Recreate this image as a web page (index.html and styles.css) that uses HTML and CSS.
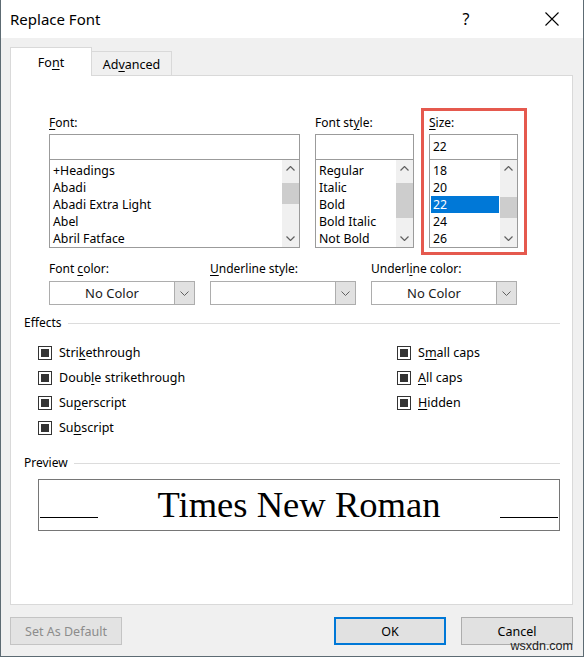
FILE: index.html
```html
<!DOCTYPE html>
<html lang="en">
<head>
  <meta charset="UTF-8">
  <meta name="viewport" content="width=device-width, initial-scale=1.0">
  <title>Replace Font</title>
  <link rel="stylesheet" href="styles.css">
</head>
<body>
  <div class="window">
    <div class="titlebar">
      <span class="title">Replace Font</span>
      <span class="help">?</span>
      <span class="close">
        <svg width="14" height="14" viewBox="0 0 14 14"><path d="M0.5 0.5 L13.5 13.5 M13.5 0.5 L0.5 13.5" stroke="#000" stroke-width="1.1" fill="none"/></svg>
      </span>
    </div>

    <div class="tabs">
      <div class="tab active">Fo<u>n</u>t</div>
      <div class="tab">Ad<u>v</u>anced</div>
    </div>

    <div class="panel">
      <div class="font-row">
        <div class="field">
          <label><u>F</u>ont:</label>
          <div class="input"></div>
          <div class="list">
            <ul class="items">
              <li>+Headings</li>
              <li>Abadi</li>
              <li>Abadi Extra Light</li>
              <li>Abel</li>
              <li>Abril Fatface</li>
            </ul>
            <div class="scrollbar">
              <span class="arrow"><svg width="9" height="5" viewBox="0 0 9 5"><polyline points="0.5,4.5 4.5,0.5 8.5,4.5" stroke="#606060" stroke-width="1.2" fill="none"/></svg></span>
              <span class="track"><span class="thumb thumb-font"></span></span>
              <span class="arrow"><svg width="9" height="5" viewBox="0 0 9 5"><polyline points="0.5,0.5 4.5,4.5 8.5,0.5" stroke="#606060" stroke-width="1.2" fill="none"/></svg></span>
            </div>
          </div>
        </div>

        <div class="field">
          <label>Font st<u>y</u>le:</label>
          <div class="input"></div>
          <div class="list">
            <ul class="items">
              <li>Regular</li>
              <li>Italic</li>
              <li>Bold</li>
              <li>Bold Italic</li>
              <li>Not Bold</li>
            </ul>
            <div class="scrollbar">
              <span class="arrow"><svg width="9" height="5" viewBox="0 0 9 5"><polyline points="0.5,4.5 4.5,0.5 8.5,4.5" stroke="#606060" stroke-width="1.2" fill="none"/></svg></span>
              <span class="track"><span class="thumb thumb-style"></span></span>
              <span class="arrow"><svg width="9" height="5" viewBox="0 0 9 5"><polyline points="0.5,0.5 4.5,4.5 8.5,0.5" stroke="#606060" stroke-width="1.2" fill="none"/></svg></span>
            </div>
          </div>
        </div>

        <div class="field size-field">
          <label><u>S</u>ize:</label>
          <div class="input">22</div>
          <div class="list">
            <ul class="items">
              <li>18</li>
              <li>20</li>
              <li class="selected">22</li>
              <li>24</li>
              <li>26</li>
            </ul>
            <div class="scrollbar">
              <span class="arrow"><svg width="9" height="5" viewBox="0 0 9 5"><polyline points="0.5,4.5 4.5,0.5 8.5,4.5" stroke="#606060" stroke-width="1.2" fill="none"/></svg></span>
              <span class="track"><span class="thumb thumb-size"></span></span>
              <span class="arrow"><svg width="9" height="5" viewBox="0 0 9 5"><polyline points="0.5,0.5 4.5,4.5 8.5,0.5" stroke="#606060" stroke-width="1.2" fill="none"/></svg></span>
            </div>
          </div>
        </div>
      </div>

      <div class="color-row">
        <div class="field">
          <label>Font <u>c</u>olor:</label>
          <div class="combo">
            <span class="combo-text">No Color</span>
            <span class="combo-btn"><svg width="9" height="5" viewBox="0 0 9 5"><polyline points="0.5,0.5 4.5,4.5 8.5,0.5" stroke="#606060" stroke-width="1" fill="none"/></svg></span>
          </div>
        </div>
        <div class="field">
          <label><u>U</u>nderline style:</label>
          <div class="combo">
            <span class="combo-text"></span>
            <span class="combo-btn"><svg width="9" height="5" viewBox="0 0 9 5"><polyline points="0.5,0.5 4.5,4.5 8.5,0.5" stroke="#606060" stroke-width="1" fill="none"/></svg></span>
          </div>
        </div>
        <div class="field">
          <label>Underl<u>i</u>ne color:</label>
          <div class="combo">
            <span class="combo-text">No Color</span>
            <span class="combo-btn"><svg width="9" height="5" viewBox="0 0 9 5"><polyline points="0.5,0.5 4.5,4.5 8.5,0.5" stroke="#606060" stroke-width="1" fill="none"/></svg></span>
          </div>
        </div>
      </div>

      <div class="section">Effects</div>
      <div class="checks">
        <div class="check"><span class="box"></span>Stri<u>k</u>ethrough</div>
        <div class="check"><span class="box"></span>Doub<u>l</u>e strikethrough</div>
        <div class="check"><span class="box"></span>Su<u>p</u>erscript</div>
        <div class="check"><span class="box"></span>Su<u>b</u>script</div>
        <div class="check"><span class="box"></span>S<u>m</u>all caps</div>
        <div class="check"><span class="box"></span><u>A</u>ll caps</div>
        <div class="check"><span class="box"></span><u>H</u>idden</div>
      </div>

      <div class="section preview-title">Preview</div>
      <div class="preview">
        <span class="uline"></span>
        <span class="sample">Times New Roman</span>
        <span class="uline"></span>
      </div>
    </div>

    <div class="buttons">
      <button class="btn" disabled>Set As Default</button>
      <div class="btn-group">
        <button class="btn primary">OK</button>
        <button class="btn">Cancel</button>
      </div>
    </div>

    <span class="watermark">wsxdn.com</span>
  </div>
</body>
</html>
```

FILE: styles.css
```css
* {
  box-sizing: border-box;
}

body {
  margin: 0;
  font-family: "Noto Sans", "Open Sans", sans-serif;
  font-size: 12px;
  color: #000;
  background: #fff;
}

u {
  text-underline-offset: 2px;
}

.window {
  position: relative;
  width: 584px;
  height: 657px;
  background: #f0f0f0;
  border: 1px solid #5d6b73;
  border-top: none;
}

.titlebar {
  height: 38px;
  display: flex;
  align-items: center;
  padding-left: 9px;
  background: #fff;
}

.title {
  font-size: 15px;
}

.help {
  margin-left: auto;
  width: 30px;
  text-align: center;
  font-size: 16px;
}

.close {
  width: 46px;
  margin-left: 48px;
  margin-right: 8px;
  display: flex;
  justify-content: center;
}

.tabs {
  height: 37px;
  display: flex;
  align-items: flex-end;
  padding-left: 9px;
}

.tab {
  width: 80px;
  height: 24px;
  display: flex;
  align-items: center;
  justify-content: center;
  padding-top: 1px;
  font-size: 12.5px;
  background: #f0f0f0;
  border: 1px solid #d9d9d9;
  border-left: none;
  border-bottom: none;
}

.tab.active {
  position: relative;
  z-index: 1;
  width: 82px;
  height: 29px;
  margin-bottom: -1px;
  padding-top: 0;
  background: #fff;
  border-left: 1px solid #d9d9d9;
}

.panel {
  width: 563px;
  height: 530px;
  margin-left: 9px;
  padding: 39px 12px 0 13px;
  background: #fff;
  border: 1px solid #d9d9d9;
}

.field label {
  display: block;
  height: 16px;
  line-height: 16px;
  margin-bottom: 3px;
  white-space: nowrap;
}

.font-row {
  display: grid;
  grid-template-columns: 251px 99px 89px;
  column-gap: 15px;
  margin-left: 25px;
}

.input {
  height: 26px;
  border: 1px solid #9b9b9b;
  padding: 4px 0 0 3px;
  line-height: 16px;
}

.list {
  display: flex;
  height: 89px;
  margin-top: -1px;
  border: 1px solid #9b9b9b;
}

.items {
  flex: 1;
  list-style: none;
  margin: 0;
  padding: 2px 1px 0 1px;
  font-size: 12.3px;
}

.items li {
  height: 17px;
  line-height: 18px;
  padding-left: 2px;
  white-space: nowrap;
}

.items li.selected {
  background: #0078d7;
  color: #fff;
}

.scrollbar {
  width: 17px;
  display: flex;
  flex-direction: column;
  background: #f0f0f0;
}

.arrow {
  height: 17px;
  display: flex;
  align-items: center;
  justify-content: center;
}

.track {
  flex: 1;
}

.thumb {
  display: block;
  background: #cdcdcd;
}

.thumb-font {
  margin-top: 6px;
  height: 21px;
}

.thumb-style {
  margin-top: 6px;
  height: 35px;
}

.thumb-size {
  margin-top: 20px;
  height: 21px;
}

.size-field {
  position: relative;
}

.size-field::after {
  content: "";
  position: absolute;
  top: -7px;
  left: -8px;
  right: -9px;
  bottom: -7px;
  border: 3px solid #e5594e;
}

.color-row {
  display: grid;
  grid-template-columns: repeat(3, 146px);
  column-gap: 15px;
  margin-left: 25px;
  margin-top: 13px;
}

.color-row .field label {
  margin-bottom: 4px;
}

.combo {
  height: 24px;
  display: flex;
  background: #fff;
  border: 1px solid #adadad;
}

.combo-text {
  flex: 1;
  display: flex;
  align-items: center;
  justify-content: center;
  font-size: 13px;
  color: #1a1a1a;
}

.combo-btn {
  width: 20px;
  display: flex;
  align-items: center;
  justify-content: center;
  background: #e1e1e1;
  border-left: 1px solid #adadad;
}

.section {
  display: flex;
  align-items: center;
  height: 16px;
  line-height: 16px;
  margin-top: 10px;
}

.section::after {
  content: "";
  flex: 1;
  margin-left: 6px;
  border-top: 1px solid #dcdcdc;
}

.checks {
  display: grid;
  grid-template-columns: 359px auto;
  grid-template-rows: repeat(4, 25px);
  grid-auto-flow: column;
  margin: 9px 0 0 14px;
}

.check {
  display: flex;
  align-items: center;
  font-size: 12.5px;
}

.box {
  width: 14px;
  height: 14px;
  margin-right: 7px;
  display: flex;
  align-items: center;
  justify-content: center;
  border: 1px solid #333;
}

.box::before {
  content: "";
  width: 8px;
  height: 8px;
  background: #333;
}

.preview-title {
  margin-top: 15px;
}

.preview {
  display: flex;
  justify-content: space-between;
  width: 522px;
  height: 52px;
  margin: 8px 0 0 14px;
  padding: 0 1px;
  border: 1px solid #767676;
}

.uline {
  width: 58px;
  height: 1px;
  margin-top: 37px;
  background: #000;
}

.sample {
  margin-top: 5px;
  font-family: "Liberation Serif", "Times New Roman", serif;
  font-size: 36.6px;
  line-height: 40px;
  height: 40px;
}

.buttons {
  display: flex;
  height: 28px;
  margin-top: 12px;
  padding: 0 10px 0 9px;
}

.btn-group {
  display: flex;
  gap: 15px;
  margin-left: auto;
}

.btn {
  width: 112px;
  height: 28px;
  font-family: "Noto Sans", "Open Sans", sans-serif;
  font-size: 12.5px;
  color: #000;
  background: #e1e1e1;
  border: 1px solid #adadad;
  padding: 0;
}

.btn:disabled {
  color: #8c8c8c;
  background: #e3e3e3;
  border-color: #c4c4c4;
}

.btn.primary {
  border: 2px solid #0078d7;
}

.watermark {
  position: absolute;
  right: 10px;
  bottom: 3px;
  font-family: "Liberation Sans", Arial, sans-serif;
  font-size: 12.5px;
  color: #222;
}
```
